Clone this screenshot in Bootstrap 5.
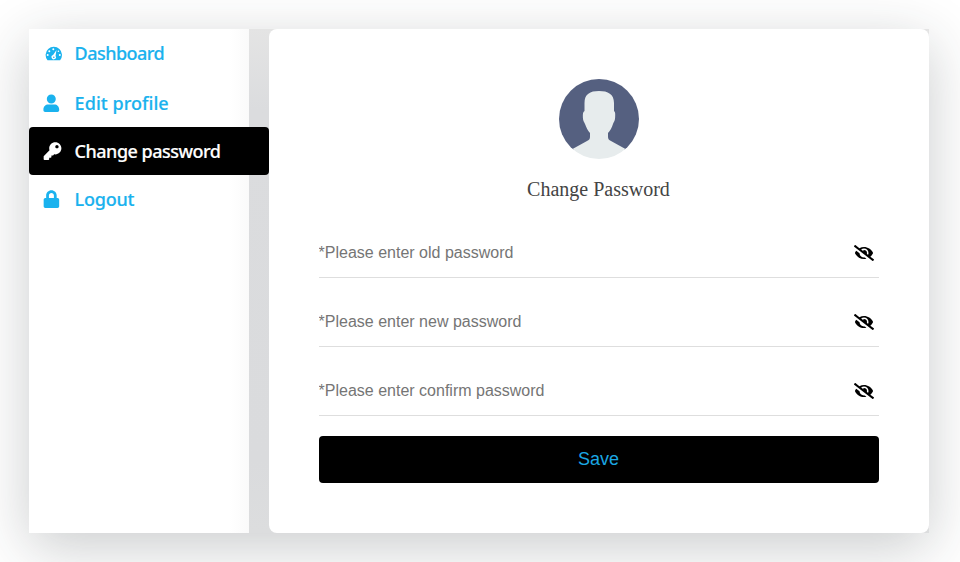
<!DOCTYPE html>
<html lang="en">
<head>
<meta charset="utf-8">
<meta name="viewport" content="width=device-width, initial-scale=1">
<title>Change Password</title>
<link href="https://cdn.jsdelivr.net/npm/bootstrap@5.3.0/dist/css/bootstrap.min.css" rel="stylesheet">
<style>
body{height:562px;padding:29px 31px 29px 29px;overflow:hidden;background:#fff;font-family:"Liberation Sans",Arial,sans-serif}
.shell{height:504px;background:linear-gradient(#e4e4e4,#dbdcde 80px,#dadbdd 430px,#dcddde);box-shadow:0 14px 54px rgba(34,40,48,.24)}
.side{width:220px;background:linear-gradient(90deg,#fff 200px,#fafafa)}
.side .nav-link{width:240px;height:48px;padding:0 0 0 14px;border-radius:4px;color:#1ab2ee;font:500 18px/48px "Noto Sans","Open Sans",sans-serif;-webkit-text-stroke:.2px}
.side .nav-link:first-child{height:50px;padding-bottom:2px}
.side .nav-link.active{background:#000;color:#fff}
.ico{width:32px;height:18px;flex:none}
.side span{margin-left:-.4px}
.l-dash{letter-spacing:-.53px}
.l-edit{letter-spacing:.05px}
.l-pass{letter-spacing:-.5px}
.l-out{letter-spacing:-.25px}
.panel{margin-left:20px;padding:50px;border-radius:8px;background:#fff}
.avatar{width:80px;height:80px}
.title{margin:15px 1px 24px 0;font:20px/30px "Liberation Serif",serif;color:#444}
.field{height:50px;margin-bottom:19px;border-bottom:1px solid #dedede}
.field .form-control{height:49px;border:0;padding:0;background:transparent;box-shadow:none;font-size:16px;text-indent:-.4px}
.field .form-control::placeholder{color:#757575}
.eye{width:20px;height:16px;margin-right:5px;flex:none}
.save{height:47px;margin-top:1px;background:#000;color:#1ba7e3;border:0;border-radius:4px;font-size:18px;padding:0 1px 0 0}
.save:hover{background:#000;color:#1ba7e3}
</style>
<script src="https://cdn.jsdelivr.net/npm/bootstrap@5.3.0/dist/js/bootstrap.bundle.min.js"></script>
</head>
<body>
<svg class="d-none">
<symbol id="eye-off" viewBox="0 0 640 512"><path d="M320 400c-75.850 0-137.250-58.710-142.900-133.110L72.200 185.820c-13.790 17.300-26.480 35.590-36.720 55.590a32.350 32.350 0 0 0 0 29.190C89.710 376.410 197.070 448 320 448c26.910 0 52.870-4 77.890-10.460L346 397.390a144.130 144.130 0 0 1-26 2.610zm313.820 58.100l-110.550-85.440a331.250 331.250 0 0 0 81.250-102.070 32.350 32.350 0 0 0 0-29.190C550.290 135.590 442.930 64 320 64a308.150 308.150 0 0 0-147.320 37.700L45.460 3.370A16 16 0 0 0 23 6.180L3.370 31.450A16 16 0 0 0 6.180 53.900l588.360 454.730a16 16 0 0 0 22.460-2.810l19.640-25.270a16 16 0 0 0-2.820-22.450zM450.190 315.610l-39.370-30.430A94.750 94.750 0 0 0 416 256a94.760 94.760 0 0 0-121.310-92.210A47.650 47.650 0 0 1 304 192a46.640 46.640 0 0 1-1.540 10l-73.610-56.890A142.310 142.310 0 0 1 320 112a143.920 143.920 0 0 1 144 144c0 21.630-5.290 41.790-13.810 59.610z"/></symbol>
</svg>
<main class="shell d-flex">
  <nav class="side nav flex-column flex-nowrap">
    <a class="nav-link d-flex align-items-center" href="#"><svg class="ico" viewBox="0 0 32 18"><g transform="translate(-.8 .3)"><path fill="currentColor" d="M5.300 16a8.200 8.200 0 1 1 12.600 0z"/><g fill="#fff"><circle cx="5.500" cy="10.800" r="1"/><circle cx="7.100" cy="6.900" r="1"/><circle cx="11.100" cy="5" r="1"/><circle cx="17.600" cy="10.800" r="1"/><circle cx="16.200" cy="7" r=".8"/><path d="M14.300 5.600l-1 6a2.200 2.200 0 1 1-2.400-.8z"/></g><circle cx="11.600" cy="13" r=".8" fill="currentColor"/></g></svg><span class="l-dash">Dashboard</span></a>
    <a class="nav-link d-flex align-items-center" href="#"><svg class="ico" viewBox="-12 -12 910.2 512"><path fill="currentColor" d="M224 256c70.700 0 128-57.300 128-128S294.700 0 224 0 96 57.300 96 128s57.300 128 128 128zm89.600 32H134.400C60.200 288 0 348.200 0 422.400V452c0 26.500 21.500 48 48 48h352c26.500 0 48-21.500 48-48v-29.600c0-74.200-60.200-134.400-134.400-134.400z"/></svg><span class="l-edit">Edit profile</span></a>
    <a class="nav-link active d-flex align-items-center" href="#"><svg class="ico" viewBox="-12 -8 910.2 520"><path fill="currentColor" fill-rule="evenodd" d="M512 176.001C512 273.203 433.202 352 336 352c-11.220 0-22.190-1.062-32.827-3.069l-24.012 27.014A23.999 23.999 0 0 1 261.223 384H224v40c0 13.255-10.745 24-24 24h-40v40c0 13.255-10.745 24-24 24H24c-13.255 0-24-10.745-24-24v-78.059c0-6.365 2.529-12.470 7.029-16.971l161.802-161.802C163.108 213.814 160 195.271 160 176 160 78.798 238.797.001 335.999 0 433.488-.001 512 78.511 512 176.001zM336 128c0 26.510 21.490 48 48 48s48-21.490 48-48-21.490-48-48-48-48 21.490-48 48z"/></svg><span class="l-pass">Change password</span></a>
    <a class="nav-link d-flex align-items-center" href="#"><svg class="ico" viewBox="-12 -8 910.2 520"><path fill="currentColor" d="M400 224h-24v-72C376 68.200 307.800 0 224 0S72 68.200 72 152v72H48c-26.500 0-48 21.500-48 48v192c0 26.500 21.500 48 48 48h352c26.500 0 48-21.500 48-48V272c0-26.500-21.500-48-48-48zm-104 0H152v-72c0-39.700 32.300-72 72-72s72 32.300 72 72v72z"/></svg><span class="l-out">Logout</span></a>
  </nav>
  <section class="panel flex-grow-1">
    <svg class="avatar d-block mx-auto" viewBox="0 0 80 80"><defs><clipPath id="round"><circle cx="40" cy="40" r="40"/></clipPath></defs><g clip-path="url(#round)"><path fill="#556080" d="M0 0h80v70.500H0z"/><path fill="#e7eced" d="M25.500 32V24C25.500 15 31 12 40 12s15 3 15 12v8c1.500 1 1.300 3 1.100 7-.1 3-1.600 4-2.100 6-1.200 4-3 7-5 9v4c0 2 1 3 3 4l14.500 8V80H13.500V70L28 62c2-1 3-2 3-4v-4c-2-2-3.500-5-5-9-.6-2-2-3-2.100-6-.1-4-.2-6 1.600-7z"/></g></svg>
    <h1 class="title text-center">Change Password</h1>
    <form>
      <div class="field d-flex align-items-center"><input class="form-control" type="password" placeholder="*Please enter old password"><svg class="eye"><use href="#eye-off"/></svg></div>
      <div class="field d-flex align-items-center"><input class="form-control" type="password" placeholder="*Please enter new password"><svg class="eye"><use href="#eye-off"/></svg></div>
      <div class="field d-flex align-items-center"><input class="form-control" type="password" placeholder="*Please enter confirm password"><svg class="eye"><use href="#eye-off"/></svg></div>
      <button class="save btn w-100" type="button">Save</button>
    </form>
  </section>
</main>
</body>
</html>
